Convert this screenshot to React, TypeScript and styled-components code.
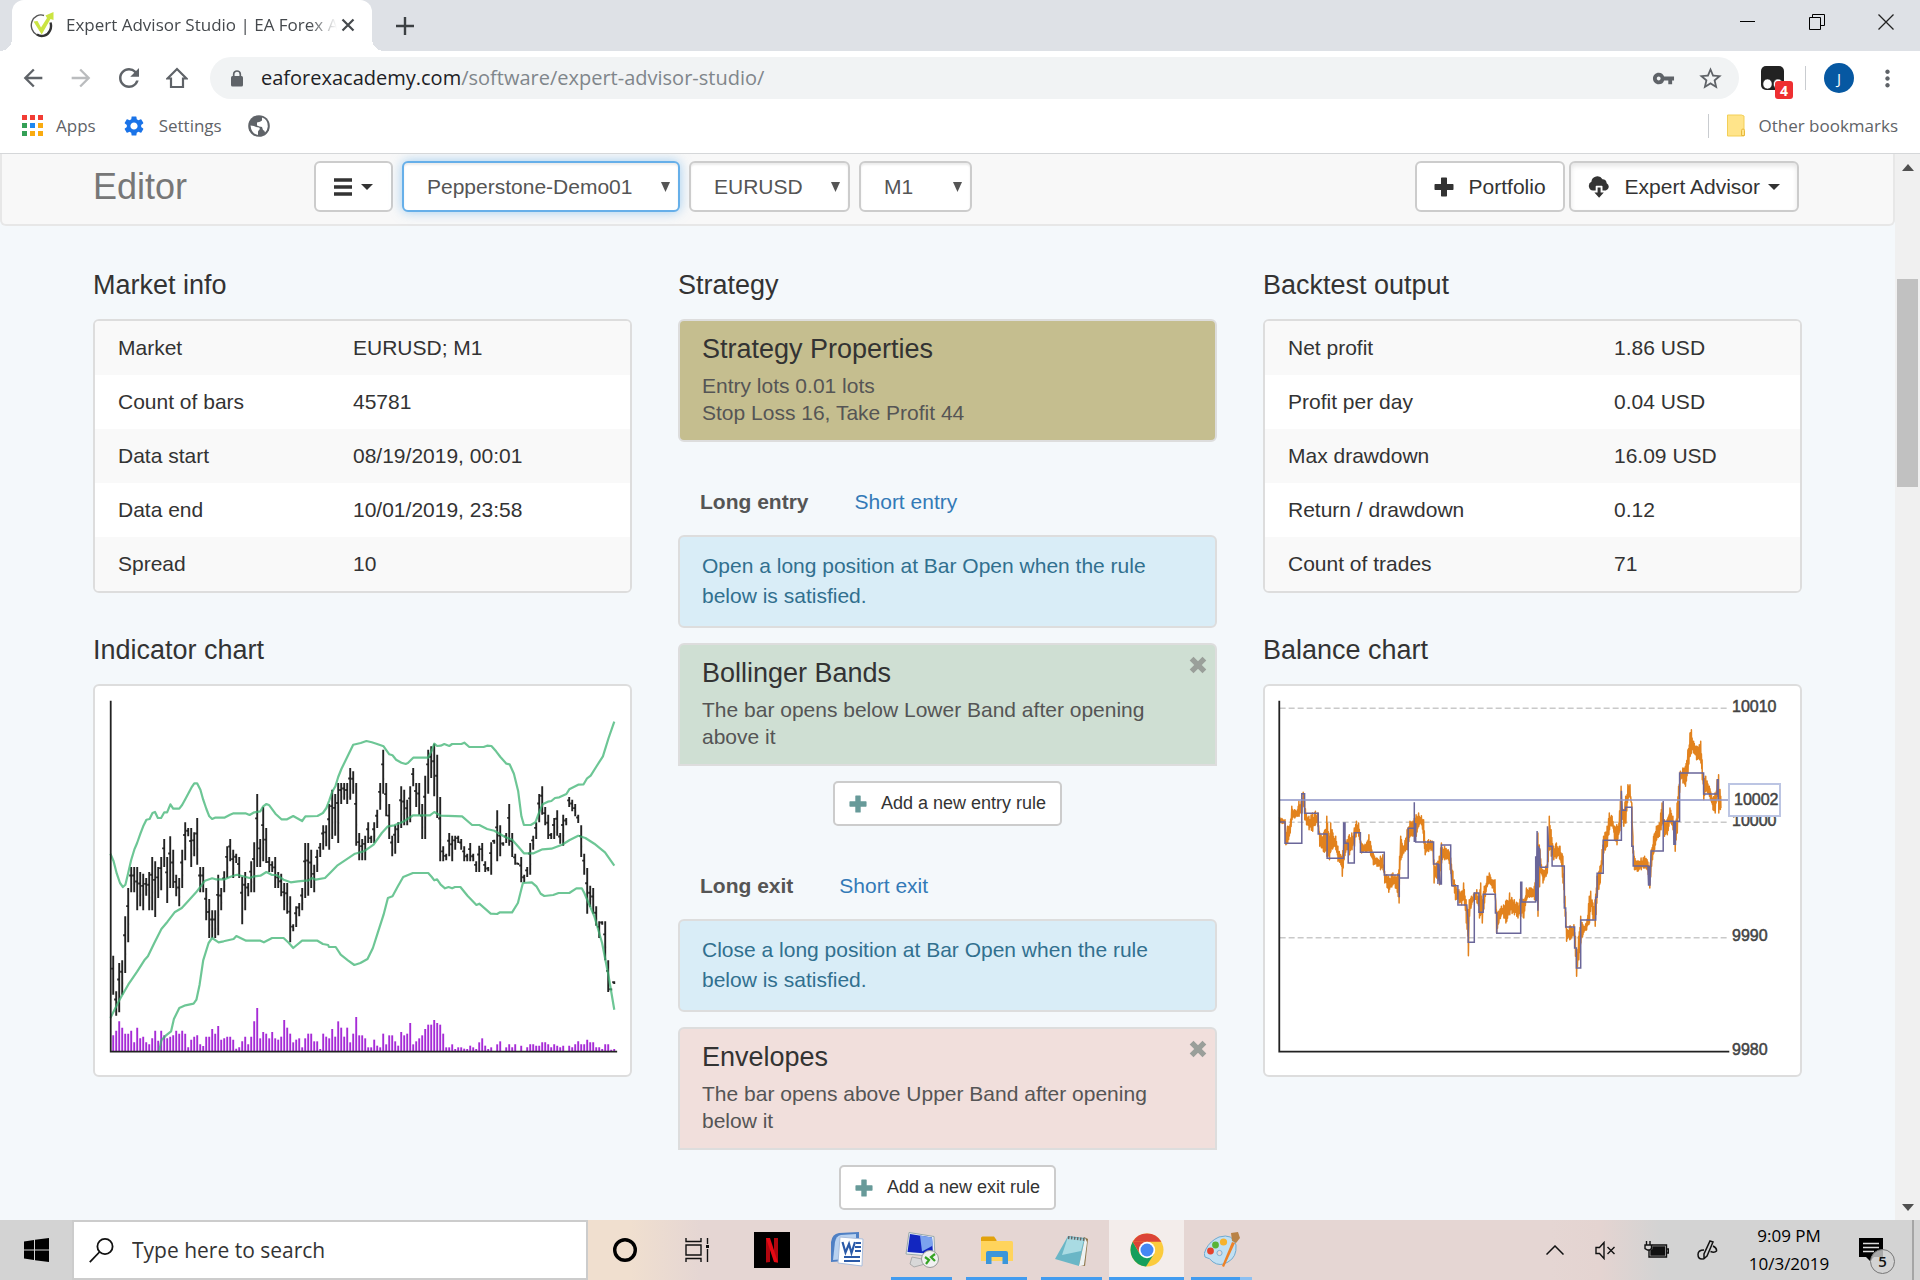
import React from "react";
import styled, { createGlobalStyle, css } from "styled-components";
import {
  MdArrowBack,
  MdArrowForward,
  MdMoreVert,
  MdRefresh,
  MdSettings,
  MdStarBorder,
  MdVpnKey,
} from "react-icons/md";

const uiFont = `"Open Sans", "Noto Sans", sans-serif`;
const pageFont = `"Liberation Sans", Arial, sans-serif`;

const GlobalStyle = createGlobalStyle`
  *, *::before, *::after { box-sizing: border-box; }
  html, body { margin: 0; padding: 0; overflow: hidden; }
  body { font-family: ${pageFont}; color: #333; background: #f4f8fb; }
  button, input, select { font: inherit; color: inherit; margin: 0; }
  h1, h2, h3, p { margin: 0; font-weight: 400; }
  svg { display: block; flex: none; }
`;

/* ---------- window ---------- */

const Desktop = styled.div`
  display: flex;
  flex-direction: column;
  height: 100vh;
  min-height: 600px;
`;

const PlainButton = styled.button`
  display: flex;
  align-items: center;
  justify-content: center;
  padding: 0;
  border: 0;
  background: none;
  cursor: pointer;
`;

const Chrome = styled.header`
  flex: none;
  font-family: ${uiFont};
  background: #fff;
  border-bottom: 1px solid #d5d7d9;
`;

const TabStrip = styled.div`
  display: flex;
  height: 51px;
  padding-left: 12px;
  background: #dee1e6;
`;

const Tab = styled.div`
  position: relative;
  display: flex;
  align-items: center;
  width: 360px;
  padding: 0 17px 2px 18px;
  border-radius: 12px 12px 0 0;
  background: #fff;

  &::before,
  &::after {
    content: "";
    position: absolute;
    bottom: 0;
    width: 12px;
    height: 12px;
  }
  &::before {
    left: -12px;
    background: radial-gradient(circle at 0 0, transparent 12px, #fff 12px);
  }
  &::after {
    right: -12px;
    background: radial-gradient(circle at 100% 0, transparent 12px, #fff 12px);
  }
`;

const TabTitle = styled.span`
  flex: 1;
  min-width: 0;
  margin: 0 4px 0 12px;
  white-space: nowrap;
  font-size: 17px;
  line-height: 24px;
  color: #45494d;
  mask-image: linear-gradient(to right, #000 90%, transparent);
`;

const NewTab = styled(PlainButton)`
  width: 66px;
  color: #3c4043;
`;

const WindowControls = styled.div`
  display: flex;
  height: 43px;
  margin-left: auto;
`;

const WindowControl = styled(PlainButton)`
  width: 69px;
  color: #000;
`;

const Toolbar = styled.div`
  display: flex;
  align-items: center;
  height: 54px;
  padding: 0 19px 0 9px;
  color: #5f6368;
`;

const NavButton = styled(PlainButton)<{ $dim?: boolean }>`
  width: 48px;
  height: 48px;
  color: ${(p) => (p.$dim ? "#babcbe" : "#5f6368")};
`;

const Omnibox = styled.div`
  display: flex;
  flex: 1;
  align-items: center;
  height: 42px;
  margin-left: 9px;
  padding: 0 15px 0 20px;
  border-radius: 21px;
  background: #f1f3f4;
`;

const Url = styled.div`
  flex: 1;
  min-width: 0;
  margin-left: 17px;
  overflow: hidden;
  white-space: nowrap;
  font-size: 20px;
  line-height: 30px;
  color: #80868b;

  b {
    font-weight: 400;
    color: #202124;
  }
`;

const OmniButton = styled(PlainButton)`
  margin-left: 22px;
  color: #5f6368;
`;

const Extension = styled(PlainButton)`
  position: relative;
  width: 32px;
  height: 42px;
  margin-left: 22px;
  justify-content: flex-start;
`;

const ExtensionCount = styled.span`
  position: absolute;
  right: 0;
  bottom: 0;
  width: 18px;
  height: 18px;
  border-radius: 3px;
  background: #ee2f31;
  font-size: 14px;
  font-weight: 700;
  line-height: 19px;
  text-align: center;
  color: #fff;
`;

const Divider = styled.span<{ $gap: number }>`
  width: 1px;
  height: 24px;
  margin: 0 ${(p) => p.$gap}px 0 12px;
  background: #c9ccd0;
`;

const Avatar = styled(PlainButton)`
  width: 30px;
  height: 30px;
  border-radius: 50%;
  background: #0658a2;
  font-size: 15px;
  color: #fff;
`;

const MenuDots = styled(PlainButton)`
  margin-left: 20px;
  color: #5f6368;
`;

const Bookmarks = styled.nav`
  display: flex;
  align-items: center;
  height: 48px;
  padding: 0 22px 7px;
  font-size: 17px;
  line-height: 24px;
  color: #5f6368;
`;

const Bookmark = styled.a<{ $indent?: number }>`
  display: flex;
  align-items: center;
  gap: 13px;
  margin-left: ${(p) => p.$indent ?? 0}px;
  color: #5f6368;
  text-decoration: none;
`;

const Spacer = styled.span`
  flex: 1;
`;

/* ---------- page ---------- */

const Viewport = styled.div`
  display: flex;
  flex: 1;
  min-height: 0;
`;

const Page = styled.main`
  flex: 1;
  min-width: 0;
  overflow: hidden;
  background: #f4f8fb;
`;

const Scrollbar = styled.div`
  display: flex;
  flex: none;
  flex-direction: column;
  align-items: center;
  width: 25px;
  padding: 10px 0 9px;
  background: #f0f0f0;
`;

const ScrollTrack = styled.div`
  flex: 1;
  width: 21px;
  padding-top: 108px;
`;

const ScrollThumb = styled.div`
  height: 22.5%;
  background: #c1c1c1;
`;

const Container = styled.div`
  max-width: 1709px;
  margin: 0 auto;
`;

const EditorBar = styled.section`
  height: 72px;
  padding-top: 7px;
  border: solid #e7e7e7;
  border-width: 0 2px 2px;
  border-radius: 0 0 6px 6px;
  background: #f8f8f8;
`;

const EditorRow = styled(Container)`
  display: flex;
  align-items: center;
`;

const Brand = styled.h1`
  width: 221px;
  font-size: 36px;
  line-height: 51px;
  color: #777;
`;

const control = css`
  height: 51px;
  border: 2px solid #ccc;
  border-radius: 6px;
  background: #fff;
  font-size: 21px;
  line-height: 30px;
`;

const BarButton = styled.button<{ $pressed?: boolean }>`
  ${control}
  display: flex;
  align-items: center;
  padding: 0 17px;
  color: #333;
  white-space: nowrap;
  cursor: pointer;
  box-shadow: ${(p) => (p.$pressed ? "inset 0 3px 5px rgba(0, 0, 0, 0.1)" : "none")};
`;

const MenuButton = styled(BarButton)`
  justify-content: center;
  gap: 9px;
  width: 79px;
`;

const SelectWrap = styled.label<{ $width: number }>`
  position: relative;
  width: ${(p) => p.$width}px;
  margin-left: 9px;

  svg {
    position: absolute;
    top: 21px;
    right: 10px;
    pointer-events: none;
  }
`;

const Select = styled.select<{ $active?: boolean }>`
  ${control}
  width: 100%;
  padding: 0 23px;
  appearance: none;
  outline: none;
  color: #555;
  border-color: ${(p) => (p.$active ? "#66afe9" : "#ccc")};
  box-shadow: ${(p) =>
    p.$active
      ? "inset 0 2px 2px rgba(0, 0, 0, 0.08), 0 0 12px rgba(102, 175, 233, 0.6)"
      : "inset 0 2px 2px rgba(0, 0, 0, 0.08)"};
`;

const BarActions = styled.div`
  display: flex;
  gap: 4px;
  margin-left: auto;
  padding-right: 3px;
`;

const ButtonLabel = styled.span`
  margin: 0 8px 0 15px;
  &:last-child {
    margin-right: 0;
  }
`;

const Columns = styled(Container)`
  display: grid;
  grid-template-columns: repeat(3, minmax(0, 1fr));
  gap: 46px;
  padding-top: 44px;
`;

const Heading = styled.h2`
  margin-bottom: 19px;
  font-size: 27px;
  line-height: 30px;
`;

const box = css`
  border: 2px solid #ddd;
  border-radius: 6px;
`;

const TablePanel = styled.div`
  ${box}
  margin-bottom: 42px;
  overflow: hidden;
  background: #fff;
`;

const DataTable = styled.table<{ $label: number }>`
  width: 100%;
  border-collapse: collapse;
  font-size: 21px;
  line-height: 30px;

  th,
  td {
    height: 54px;
    padding: 0;
    font-weight: 400;
    text-align: left;
  }
  th {
    width: ${(p) => p.$label}px;
    padding-left: 23px;
  }
  tr:nth-child(odd) {
    background: #f9f9f9;
  }
`;

const ChartPanel = styled.div`
  ${box}
  height: 393px;
  overflow: hidden;
  background: #fff;
`;

const Card = styled.article<{ $color: string; $joined?: boolean }>`
  ${box}
  position: relative;
  padding: 13px 22px 14px;
  background: ${(p) => p.$color};
  ${(p) =>
    p.$joined &&
    css`
      border-bottom-right-radius: 0;
      border-bottom-left-radius: 0;
    `}
`;

const CardTitle = styled.h3`
  margin-bottom: 8px;
  font-size: 27px;
  line-height: 30px;
`;

const CardText = styled.p`
  max-width: 460px;
  font-size: 21px;
  line-height: 27px;
  color: #555;
`;

const RemoveRule = styled(PlainButton)`
  position: absolute;
  top: 10px;
  right: 7px;
  width: 20px;
  height: 20px;
`;

const RuleTabs = styled.nav`
  display: flex;
  margin: 30px 0 3px;
`;

const RuleTab = styled.a<{ $current?: boolean }>`
  padding: 15px 24px 15px 22px;
  font-size: 21px;
  line-height: 30px;
  text-decoration: none;
  font-weight: ${(p) => (p.$current ? 700 : 400)};
  color: ${(p) => (p.$current ? "#555" : "#337ab7")};
`;

const Hint = styled.p`
  ${box}
  margin-bottom: 15px;
  padding: 14px 22px 15px;
  background: #d9edf7;
  font-size: 21px;
  line-height: 30px;
  color: #31708f;

  span {
    display: block;
    max-width: 460px;
  }
`;

const AddRule = styled.button`
  display: flex;
  align-items: center;
  gap: 14px;
  height: 45px;
  margin: 15px auto 0;
  padding: 0 14px;
  border: 2px solid #ccc;
  border-radius: 5px;
  background: #fff;
  font-size: 18px;
  line-height: 27px;
  color: #333;
  cursor: pointer;
`;

/* ---------- taskbar ---------- */

const Taskbar = styled.footer`
  display: flex;
  flex: none;
  height: 60px;
  font-family: ${uiFont};
  background: linear-gradient(
    to right,
    #d3d3d3 0,
    #d3d3d3 73px,
    #f0dfcf 560px,
    #f0dfcf 630px,
    #e5d6d3 700px,
    #e5d6d3 1550px,
    #e4d4d1 1600px,
    #d3d3d3 1660px
  );
`;

const StartButton = styled(PlainButton)`
  width: 72px;
`;

const SearchBox = styled.label`
  display: flex;
  align-items: center;
  width: 516px;
  padding-left: 15px;
  border: 2px solid #ccc;
  background: #fff;
`;

const SearchInput = styled.input`
  flex: 1;
  min-width: 0;
  margin-left: 18px;
  padding: 0;
  border: 0;
  outline: 0;
  background: none;
  font-size: 21px;
  line-height: 30px;
  color: #333;

  &::placeholder {
    color: #333;
    opacity: 1;
  }
`;

const TaskItem = styled(PlainButton)<{
  $open?: boolean;
  $focused?: boolean;
  $stacked?: boolean;
  $system?: boolean;
}>`
  position: relative;
  width: ${(p) => (p.$system ? 73 : 75)}px;
  background: ${(p) => (p.$focused ? "#f3edeb" : "none")};

  &::after {
    content: "";
    position: absolute;
    bottom: 0;
    left: ${(p) => (p.$focused ? 0 : 7)}px;
    right: ${(p) => (p.$focused ? 0 : 7)}px;
    height: 3px;
    display: ${(p) => (p.$open || p.$focused ? "block" : "none")};
    background: ${(p) =>
      p.$stacked ? "linear-gradient(to right, #429cf0 80%, #8cc0f2 80%)" : "#429cf0"};
  }
`;

const Tray = styled.div`
  display: flex;
  margin-left: auto;
  padding-right: 6px;
`;

const TrayButton = styled(PlainButton)`
  width: 51px;
`;

const Clock = styled.time`
  width: 112px;
  padding-top: 2px;
  font-size: 17px;
  line-height: 28px;
  text-align: center;
  color: #000;
`;

const Notifications = styled(PlainButton)`
  position: relative;
  width: 51px;
  margin-right: 16px;
`;

const NoticeCount = styled.span`
  position: absolute;
  right: 1px;
  bottom: 6px;
  width: 25px;
  height: 25px;
  border: 1px solid #777;
  border-radius: 50%;
  background: rgba(211, 211, 211, 0.8);
  font-size: 15px;
  font-weight: 600;
  line-height: 23px;
  color: #111;
`;

const ShowDesktop = styled.span`
  width: 2px;
  background: #a5a5a5;
`;

/* ---------- glyphs ---------- */

const PlusGlyph = ({ size, color }: { size: number; color: string }) => (
  <svg width={size} height={size} viewBox="0 0 20 20" fill={color}>
    <path d="M7 1.2Q7 .5 7.7.5h4.6q.7 0 .7.700V7h5.800q.7 0 .7.700v4.600q0 .7-.7.700H13v5.800q0 .7-.7.700H7.700q-.7 0-.7-.7V13H1.200q-.7 0-.7-.7V7.700q0-.7.7-.7H7z" />
  </svg>
);

const CrossGlyph = () => (
  <svg width="20" height="20" viewBox="0 0 20 20">
    <path d="M3.600 3.600l12.800 12.800M16.400 3.600L3.600 16.400" stroke="#9a9f9a" strokeWidth="5.400" />
  </svg>
);

const Caret = () => (
  <svg width="12" height="6" viewBox="0 0 12 6">
    <path d="M0 0h12L6 6z" fill="#333" />
  </svg>
);

const SelectArrow = () => (
  <svg width="9" height="10" viewBox="0 0 9 10">
    <path d="M0 0h9L4.500 10z" fill="#555" />
  </svg>
);

const CloudDownload = () => (
  <svg width="22" height="22" viewBox="0 0 22 22" fill="#333">
    <path d="M5 14.500a4.600 4.600 0 0 1-1.600-8.700A6 6 0 0 1 14.500 3.300a4.500 4.500 0 0 1 4.200 4 3.900 3.900 0 0 1-.9 7.200h-3.300v-4q0-.7-.7-.7H8.400q-.7 0-.7.700v4z" />
    <path d="M9.600 11.500h3v5h3.200L11.100 21.700 6.400 16.500h3.200z" />
  </svg>
);

const LockGlyph = () => (
  <svg width="14" height="17" viewBox="0 0 14 17">
    <rect x="1" y="6" width="12" height="10.500" rx="1.500" fill="#5f6368" />
    <path d="M3.700 7V4.300a3.300 3.300 0 0 1 6.600 0V7" fill="none" stroke="#5f6368" strokeWidth="1.700" />
  </svg>
);

const GlobeGlyph = () => (
  <svg width="22" height="22" viewBox="0 0 22 22">
    <circle cx="11" cy="11" r="10.800" fill="#5f6368" />
    <path
      d="M2.500 10.500q4 .2 5.500 1.500l3 .5q1.500 1 0 2.500l-1 1.500v3.500q-6.500-.8-7.500-9.500z"
      fill="#fff"
    />
    <path d="M14 2.500q6 2 5.800 9-.3 4-2.800 6-.3-2.500-2-2.500l-1-3-2.500-.5-2.500-1v-3l3-.8 2-1.200z" fill="#fff" />
  </svg>
);

/* ---------- charts ---------- */

type Pair = [number, number];

// Chart data is kept on a 1568 x 1260 plotting grid and projected onto the panel.
const px = (x: number) => (x - 42) / 2.8;
const py = (y: number) => (y - 49) / 3;
const parse = (s: string): Pair[] =>
  s
    .trim()
    .split(/\s+/)
    .map((p) => p.split(",").map(Number) as Pair);
const line = (pts: Pair[]) =>
  pts.map(([x, y], i) => `${i ? "L" : "M"}${px(x).toFixed(1)} ${py(y).toFixed(1)}`).join("");

const BARS = parse(`858,975 965,1038 880,1028 872,975 740,910 655,818 592,668 592,668 592,722 607,710 612,722 625,678
607,722 562,722 575,742 592,685 562,662 508,592 562,700 500,655 540,655 615,680 625,710 540,655 458,572 475,500 475,592
488,560 445,585 592,668 592,668 655,752 688,805 722,805 722,805 615,797 655,722 605,668 530,625 508,575 540,625 552,580
562,625 622,764 607,722 640,680 575,668 518,668 373,592 508,592 412,575 475,580 562,607 575,607 562,655 607,655 612,680
640,722 640,732 680,818 764,785 710,772 700,740 655,722 520,685 520,678 540,655 585,668 540,607 520,562 467,540 467,530
403,540 360,508 373,498 340,520 340,403 340,390 340,403 295,390 305,372 340,528 490,572 508,572 498,572 458,520 498,520
458,520 420,475 340,420 240,372 340,440 403,508 498,560 467,552 458,520 350,475 360,467 390,467 350,458 295,350 340,412
340,435 403,508 318,508 240,372 230,325 222,380 255,445 382,575 530,575 552,572 490,560 498,575 498,540 498,520 508,540
530,575 552,575 520,575 552,575 575,607 528,607 520,575 575,607 592,605 518,615 510,522 422,575 467,560 518,528 490,520
403,528 490,562 552,585 580,585 562,638 615,638 592,622 520,615 498,540 458,508 373,458 350,435 412,467 435,508 490,508
445,508 422,498 490,522 435,528 445,467 382,412 390,425 403,440 435,460 467,562 552,615 595,732 648,712 655,732 710,768
755,805 755,765 755,872 872,967 958,960 935,943`);

const VOLUMES =
  `1097 1083 1055 1074 1092 1092 1083 1118 1074 1106 1101 1118 1124 1106 1083 1113 1083 1097 1106 1101 1097 1083 1092 1083
1092 1133 1110 1101 1097 1124 1129 1101 1101 1078 1092 1069 1110 1106 1101 1101 1110 1137 1133 1115 1101 1124 1101 1055 1015
1106 1087 1092 1106 1087 1106 1110 1101 1051 1074 1092 1118 1110 1106 1133 1106 1092 1092 1115 1115 1138 1092 1101 1106 1078
1101 1055 1074 1101 1074 1118 1092 1042 1097 1097 1106 1133 1133 1110 1128 1133 1092 1124 1097 1097 1115 1128 1087 1097 1092
1060 1124 1115 1106 1097 1078 1065 1065 1051 1060 1065 1092 1133 1133 1124 1138 1133 1133 1137 1138 1128 1133 1138 1118 1106
1128 1138 1133 1145 1124 1115 1145 1133 1124 1133 1124 1145 1128 1145 1133 1124 1124 1128 1128 1118 1118 1124 1133 1124 1128
1133 1128 1145 1128 1133 1124 1115 1124 1124 1110 1118 1118 1133 1133 1138 1124 1124 1140 1138`
    .split(/\s+/)
    .map(Number);

const BANDS = [
  `85,552 94,575 103,612 112,640 120,652 127,645 135,610 143,572 152,540 160,520 169,492 177,470 186,450 195,448 203,430
210,427 218,445 227,445 236,428 244,428 253,404 261,417 278,417 286,406 295,388 304,370 312,354 320,341 328,341 337,360
345,390 354,418 362,440 370,448 378,444 404,444 420,435 430,431 463,431 475,436 488,428 505,425 513,410 522,403 530,407
547,432 564,449 580,449 597,439 622,454 631,440 665,439 680,430 690,415 698,392 706,367 715,350 723,322 732,298 765,225
774,223 786,220 802,214 817,218 830,222 850,230 866,254 875,257 885,270 900,279 912,283 918,280 933,264 975,264 984,245
992,222 1000,229 1010,228 1020,223 1034,229 1042,223 1068,223 1076,219 1090,232 1130,232 1140,228 1152,229 1165,245
1177,262 1194,282 1203,284 1215,312 1227,365 1236,440 1243,466 1262,466 1275,458 1285,430 1295,404 1310,396 1320,394
1330,385 1342,383 1362,373 1370,359 1395,345 1410,344 1420,326 1430,318 1445,292 1464,260 1480,205 1496,156`,
  `85,1045 110,992 135,945 160,906 180,872 190,860 208,820 228,778 245,756 265,728 285,715 300,698 325,668 350,633 370,626
380,629 405,629 425,620 440,615 475,625 488,620 505,618 522,607 538,616 550,616 570,630 590,638 610,635 640,632 650,625
660,630 686,625 700,610 720,588 745,570 770,552 795,545 822,525 845,490 862,470 880,467 905,456 933,437 980,437 992,427
1010,438 1070,440 1098,466 1118,466 1140,478 1160,483 1190,502 1210,510 1228,532 1243,551 1270,551 1295,539 1320,537
1350,525 1370,512 1395,498 1415,505 1440,522 1470,548 1496,588`,
  `222,1143 228,1112 240,1098 255,1085 263,1048 278,1015 295,1007 318,1002 326,990 335,945 345,872 360,820 370,805 388,818
402,815 430,808 438,799 465,813 505,813 515,818 538,805 570,805 585,820 597,835 622,813 665,813 680,823 695,826 697,832
716,832 730,855 750,872 768,886 785,880 805,868 820,835 835,785 850,735 862,685 875,680 890,650 905,622 932,610 975,610
985,622 992,632 1000,629 1010,645 1022,656 1032,652 1042,656 1050,652 1065,652 1085,678 1110,706 1118,702 1150,732
1168,733 1176,728 1210,728 1226,700 1240,640 1265,638 1278,650 1290,672 1300,679 1325,676 1340,670 1370,670 1390,656
1405,656 1412,670 1440,740 1462,820 1480,920 1496,1020`,
].map(parse);

const LadderBars = () => (
  <g stroke="#222" strokeWidth="1.900">
    {BARS.map(([hi, lo], i) => {
      const x = px(93 + i * 8.4);
      const top = py(hi);
      const bottom = py(lo);
      return (
        <path
          key={i}
          fill="none"
          d={`M${x} ${top}V${bottom}M${x - 2} ${(top * 2 + bottom) / 3}H${x}M${x} ${(top + bottom * 2) / 3}H${x + 1}`}
        />
      );
    })}
  </g>
);

const IndicatorChart = () => (
  <svg width="535" height="389" viewBox="0 0 535 389" role="img" aria-label="Indicator chart">
    <g stroke="#a62bd6" strokeWidth="1.900">
      {VOLUMES.map((v, i) => {
        const x = px(93 + i * 8.4);
        return <path key={i} d={`M${x} ${py(v)}V${py(1145)}`} />;
      })}
    </g>
    <LadderBars />
    <g fill="none" stroke="#3cb371" strokeOpacity="0.75" strokeWidth="2.200" strokeLinejoin="round">
      {BANDS.map((b, i) => (
        <path key={i} d={line(b)} />
      ))}
    </g>
    <path d={`M${px(86)} ${py(93)}V${py(1146)}H${px(1504)}`} fill="none" stroke="#222" strokeWidth="1.800" />
  </svg>
);

const EQUITY = `83,442,460 98,450,465 100,500,525 105,470,520 112,465,490 117,410,450 125,420,445 133,420,440 137,395,440
145,395,430 149,368,400 153,395,450 158,435,465 165,440,480 175,430,485 183,425,465 190,430,470 195,490,530 205,500,545
215,440,560 222,500,570 226,460,545 232,490,535 240,500,540 246,530,575 254,555,585 258,560,620 263,500,570 272,510,540
278,495,555 285,490,540 292,475,530 298,455,490 304,460,500 312,520,550 325,525,545 333,495,545 345,550,585 355,565,590
365,560,600 372,555,600 377,605,640 388,620,668 400,610,645 412,620,668 417,600,700 419,560,600 422,500,570 430,530,550
440,480,540 448,455,500 456,455,500 465,435,500 472,430,470 480,438,465 486,450,520 490,515,555 500,510,545 511,515,540
515,570,640 522,580,625 530,560,645 536,520,580 545,530,570 555,540,570 560,550,600 568,605,650 575,645,690 585,660,700
592,665,705 598,640,690 605,690,760 611,720,858 614,690,740 620,680,705 628,670,690 635,660,700 642,680,745 646,640,730
650,690,760 656,650,700 664,620,650 670,610,640 678,630,655 686,630,680 690,720,790 696,725,760 704,710,735 716,695,760
727,670,735 740,690,735 750,700,745 758,680,740 766,690,745 774,655,690 785,655,680 796,650,690 801,570,690 806,490,740
812,540,610 820,600,640 832,585,610 838,440,540 843,480,560 850,530,570 858,520,565 868,530,570 876,560,640 880,640,700
882,680,740 886,770,815 895,770,810 907,765,800 911,800,860 914,850,920 920,800,870 926,740,820 932,765,795 942,760,780
950,680,760 954,665,710 960,700,750 966,690,770 972,620,680 980,590,640 990,500,550 1000,470,530 1006,430,480 1014,440,465
1020,470,510 1027,465,525 1033,460,490 1039,350,470 1046,420,470 1052,380,460 1058,345,390 1064,345,380 1069,400,450
1072,500,550 1076,560,600 1084,575,605 1095,565,600 1105,560,595 1112,570,600 1119,590,655 1124,540,590 1130,500,550
1138,470,510 1146,460,500 1154,400,460 1160,450,500 1168,450,495 1176,415,455 1184,440,480 1190,460,545 1196,400,490
1200,350,410 1205,305,330 1212,295,340 1219,290,350 1226,240,310 1232,190,260 1236,180,250 1242,215,250 1250,230,270
1258,225,270 1262,215,280 1266,270,330 1270,320,390 1276,320,365 1286,350,380 1296,385,420 1302,370,430 1308,330,380
1312,315,430 1318,380,415 1321,390,420`
  .split(/\s+/)
  .map((p) => p.split(",").map(Number));

// Swings between the low and high of every interval, varying the reach a little at each step.
const equityLine = (): Pair[] => {
  const out: Pair[] = [];
  for (let i = 0; i < EQUITY.length - 1; i++) {
    const [x0, t0, b0] = EQUITY[i];
    const [x1, t1, b1] = EQUITY[i + 1];
    out.push([x0, t0], [x0 + 0.5, b0]);
    for (let x = x0 + 2; x < x1 - 1; x += 2) {
      const k = (x - x0) / (x1 - x0);
      const top = t0 + (t1 - t0) * k;
      const bottom = b0 + (b1 - b0) * k;
      const reach = ((x * 37) % 23) / 23;
      const slack = (bottom - top) * 0.4 * reach;
      out.push([x, top + slack], [x + 1, bottom - slack * 0.8]);
    }
  }
  return out;
};

const BALANCE = parse(`83,457 98,457 98,521 145,521 145,372 153,372 153,431 191,431 191,493 216,493 216,566 262,566 262,460
266,460 266,521 275,521 275,580 292,580 292,489 309,489 309,548 376,548 376,616 418,616 418,683 418,625 443,625 443,476
460,476 460,398 460,517 464,460 464,517 514,517 514,583 526,583 526,643 529,583 532,643 536,643 536,526 562,526 562,583
565,648 582,648 582,706 607,706 611,760 611,818 628,818 628,670 641,670 641,728 653,728 653,674 687,674 687,730 691,730
691,791 758,791 758,638 761,638 761,697 800,697 800,560 802,695 804,484 806,723 808,530 811,590 811,535 813,593 833,593
833,470 836,530 846,530 846,589 880,589 880,715 884,715 884,772 909,772 909,835 914,835 914,895 926,895 926,751 968,751
968,683 972,683 972,611 989,611 989,512 1040,512 1040,363 1042,422 1052,422 1052,413 1069,413 1069,530 1073,530 1073,589
1114,589 1116,648 1118,589 1120,648 1123,544 1157,544 1157,394 1157,455 1186,455 1187,526 1189,455 1191,526 1191,455
1203,455 1203,310 1270,310 1270,373 1308,373 1309,328 1310,373 1311,328 1311,390`);

const BalanceChart = () => (
  <svg width="535" height="389" viewBox="0 0 535 389" role="img" aria-label="Balance chart">
    <g stroke="#c9c9c9" strokeWidth="1.500" strokeDasharray="6 3">
      {[116, 458, 804].map((y) => (
        <path key={y} d={`M${px(83)} ${py(y)}H${px(1336)}`} />
      ))}
    </g>
    <path d={line(equityLine())} fill="none" stroke="#e2821d" strokeWidth="1.500" strokeLinejoin="round" />
    <path d={line(BALANCE)} fill="none" stroke="#6a6699" strokeWidth="1.500" />
    <path d={`M${px(82)} ${py(391)}H${px(1340)}`} stroke="#8c93c6" strokeWidth="1.500" />
    <path d={`M${px(82)} ${py(93)}V${py(1146)}H${px(1342)}`} fill="none" stroke="#222" strokeWidth="1.800" />
    <g fontFamily="Liberation Sans, Arial, sans-serif" fontSize="16" fill="#444" stroke="#444" strokeWidth="0.500">
      <text x="467" y="26">10010</text>
      <text x="467" y="140">10000</text>
      <text x="467" y="255">9990</text>
      <text x="467" y="369">9980</text>
      <rect x="464" y="98" width="51" height="32" fill="#fff" stroke="#bcc5e3" strokeWidth="2" />
      <text x="469" y="119">10002</text>
    </g>
  </svg>
);

/* ---------- content ---------- */

const marketInfo = [
  ["Market", "EURUSD; M1"],
  ["Count of bars", "45781"],
  ["Data start", "08/19/2019, 00:01"],
  ["Data end", "10/01/2019, 23:58"],
  ["Spread", "10"],
];

const backtest = [
  ["Net profit", "1.86 USD"],
  ["Profit per day", "0.04 USD"],
  ["Max drawdown", "16.09 USD"],
  ["Return / drawdown", "0.12"],
  ["Count of trades", "71"],
];

const InfoTable = ({ rows, label }: { rows: string[][]; label: number }) => (
  <TablePanel>
    <DataTable $label={label}>
      <tbody>
        {rows.map(([name, value]) => (
          <tr key={name}>
            <th scope="row">{name}</th>
            <td>{value}</td>
          </tr>
        ))}
      </tbody>
    </DataTable>
  </TablePanel>
);

const BarSelect = (props: { label: string; value: string; width: number; active?: boolean }) => (
  <SelectWrap $width={props.width}>
    <Select $active={props.active} aria-label={props.label} defaultValue={props.value}>
      <option>{props.value}</option>
    </Select>
    <SelectArrow />
  </SelectWrap>
);

const RuleGroup = (props: {
  kind: string;
  hint: string;
  title: string;
  text: string;
  color: string;
}) => (
  <section>
    <RuleTabs>
      <RuleTab href="#long" $current>
        Long {props.kind}
      </RuleTab>
      <RuleTab href="#short">Short {props.kind}</RuleTab>
    </RuleTabs>
    <Hint>
      <span>{props.hint}</span>
    </Hint>
    <Card $color={props.color} $joined>
      <CardTitle>{props.title}</CardTitle>
      <CardText>{props.text}</CardText>
      <RemoveRule aria-label={`Remove ${props.title}`}>
        <CrossGlyph />
      </RemoveRule>
    </Card>
    <AddRule>
      <PlusGlyph size={18} color="#679a99" />
      Add a new {props.kind} rule
    </AddRule>
  </section>
);

const BrowserChrome = () => (
  <Chrome>
    <TabStrip>
      <Tab>
        <svg width="24" height="26" viewBox="0 0 24 26">
          <path d="M14 3.500A9.600 10.500 0 0 0 2 9.500a11 11 0 0 0 5 13.500" fill="none" stroke="#555" strokeWidth="1.400" />
          <path d="M7 22.500a9 9.500 0 0 0 13-4 11 11 0 0 0 .5-8" fill="none" stroke="#333" strokeWidth="2.400" />
          <path d="M3.500 9.500l4-.5 3.500 6.500 6-9.500-1.500-2.500L23.500 0v8l-3-1-8.800 15.500z" fill="#cbe442" />
        </svg>
        <TabTitle>Expert Advisor Studio | EA Forex A</TabTitle>
        <PlainButton aria-label="Close tab">
          <svg width="14" height="14" viewBox="0 0 14 14" stroke="#45494d" strokeWidth="2.200">
            <path d="M1.500 1.500l11 11M12.500 1.500l-11 11" />
          </svg>
        </PlainButton>
      </Tab>
      <NewTab aria-label="New tab">
        <svg width="18" height="18" viewBox="0 0 18 18" stroke="#3c4043" strokeWidth="2.400">
          <path d="M9 0v18M0 9h18" />
        </svg>
      </NewTab>
      <WindowControls>
        <WindowControl aria-label="Minimize">
          <svg width="15" height="15" viewBox="0 0 15 15" stroke="#000">
            <path d="M0 7.500h15" />
          </svg>
        </WindowControl>
        <WindowControl aria-label="Restore">
          <svg width="16" height="16" viewBox="0 0 16 16" stroke="#000" fill="none">
            <path d="M.5 3.500h11v12H.5zM3.500 3.500v-3h12v11h-4" />
          </svg>
        </WindowControl>
        <WindowControl aria-label="Close">
          <svg width="16" height="16" viewBox="0 0 16 16" stroke="#222" strokeWidth="1.300">
            <path d="M.5.500l15 15M15.500.500l-15 15" />
          </svg>
        </WindowControl>
      </WindowControls>
    </TabStrip>
    <Toolbar>
      <NavButton aria-label="Back">
        <MdArrowBack size={28} />
      </NavButton>
      <NavButton $dim aria-label="Forward">
        <MdArrowForward size={28} />
      </NavButton>
      <NavButton aria-label="Reload">
        <MdRefresh size={30} />
      </NavButton>
      <NavButton aria-label="Home">
        <svg width="22" height="22" viewBox="0 0 22 22" fill="none" stroke="#5f6368" strokeWidth="2.200">
          <path d="M1.500 11.500L11 2l9.500 9.500H17V20H5v-8.500z" />
        </svg>
      </NavButton>
      <Omnibox>
        <LockGlyph />
        <Url>
          <b>eaforexacademy.com</b>/software/expert-advisor-studio/
        </Url>
        <OmniButton aria-label="Saved passwords">
          <MdVpnKey size={23} />
        </OmniButton>
        <OmniButton aria-label="Bookmark this page">
          <MdStarBorder size={27} />
        </OmniButton>
      </Omnibox>
      <Extension aria-label="Extension">
        <svg width="23" height="24" viewBox="0 0 23 24">
          <rect width="23" height="24" rx="5" fill="#222" />
          <ellipse cx="6.500" cy="18" rx="4.600" ry="5" fill="#fff" stroke="#222" strokeWidth=".6" />
          <ellipse cx="17" cy="18" rx="4.600" ry="5" fill="#fff" stroke="#222" strokeWidth=".6" />
        </svg>
        <ExtensionCount>4</ExtensionCount>
      </Extension>
      <Divider $gap={18} />
      <Avatar aria-label="Profile">J</Avatar>
      <MenuDots aria-label="Menu">
        <MdMoreVert size={27} />
      </MenuDots>
    </Toolbar>
    <Bookmarks>
      <Bookmark href="#apps">
        <svg width="21" height="21" viewBox="0 0 21 21">
          {["#f23c34", "#f23c34", "#f23c34", "#34a056", "#1e88f2", "#f9ab11", "#34a056", "#f9ab11", "#f9ab11"].map(
            (c, i) => (
              <rect key={i} x={(i % 3) * 8} y={Math.floor(i / 3) * 8} width="5" height="5" fill={c} />
            )
          )}
        </svg>
        Apps
      </Bookmark>
      <Bookmark href="#settings" $indent={26}>
        <MdSettings size={24} color="#1a73e8" />
        Settings
      </Bookmark>
      <Bookmark href="#site" $indent={26} aria-label="Site">
        <GlobeGlyph />
      </Bookmark>
      <Spacer />
      <Divider $gap={18} />
      <Bookmark href="#other">
        <svg width="18" height="23" viewBox="0 0 18 23">
          <path d="M.5 1h14l2.500 1v20H.5z" fill="#ffe48a" stroke="#f3cf57" />
          <path d="M14.500 21.500v-5a1.500 1.500 0 0 1 3 0v5z" fill="#ffe48a" stroke="#e9b93c" />
        </svg>
        Other bookmarks
      </Bookmark>
    </Bookmarks>
  </Chrome>
);

const WindowsTaskbar = () => (
  <Taskbar>
    <StartButton aria-label="Start">
      <svg width="25" height="24" viewBox="0 0 25 24">
        <path d="M0 3.500l10-1.500v9.500H0zM11 1.800L25 0v11.500H11zM0 12.500h10V22L0 20.500zM11 12.500h14V24l-14-1.800z" />
      </svg>
    </StartButton>
    <SearchBox>
      <svg width="25" height="25" viewBox="0 0 25 25" fill="none" stroke="#111" strokeWidth="1.800">
        <circle cx="16" cy="8.500" r="7.600" />
        <path d="M10.500 14L.8 24.200" />
      </svg>
      <SearchInput placeholder="Type here to search" aria-label="Type here to search" />
    </SearchBox>
    <TaskItem $system aria-label="Cortana">
      <svg width="26" height="26" viewBox="0 0 26 26">
        <circle cx="13" cy="13" r="10.300" fill="none" stroke="#000" strokeWidth="3.400" />
      </svg>
    </TaskItem>
    <TaskItem $system aria-label="Task view">
      <svg width="25" height="24" viewBox="0 0 25 24" fill="none" stroke="#111" strokeWidth="1.400">
        <path d="M1 0v3.500h15V0M1 7h15v10H1zM1 24v-3.500h15V24M22.500 0v6M22.500 11v13" />
        <path d="M21 7h3v3h-3z" fill="#111" stroke="none" />
      </svg>
    </TaskItem>
    <TaskItem aria-label="Netflix">
      <svg width="36" height="36" viewBox="0 0 36 36">
        <path d="M0 0h36v36H0z" />
        <path d="M12 6h4v24l-4 .6zM20 6h4v24.600l-4-.6z" fill="#b1060f" />
        <path d="M12 6h4l8 24.600-4-.6z" fill="#e50914" />
      </svg>
    </TaskItem>
    <TaskItem aria-label="Word">
      <svg width="34" height="36" viewBox="0 0 34 36">
        <path d="M1 10Q2 2 9 1l20-1v28L1 30z" fill="#4f80c4" />
        <path d="M5 10Q6 4 11 3l15-1v24L3 28z" fill="#b9d2f0" />
        <path d="M10 5l23 2-1 27-24-3z" fill="#fff" stroke="#a9bedd" />
        <path d="M12.500 10l3 10.500L19 12l2.500 9L25 10" fill="none" stroke="#2a5aa8" strokeWidth="2.200" />
        <path d="M26 11h5M25 15h6M25 19h6M14 25h16M14 29h16" stroke="#2a5aa8" strokeWidth="2" />
      </svg>
    </TaskItem>
    <TaskItem $open aria-label="Remote Desktop">
      <svg width="36" height="36" viewBox="0 0 36 36">
        <path d="M8 25l10 2 3 5-11 3-4-3z" fill="#d8d8d8" stroke="#aaa" />
        <path d="M5 .500l25 4 1 20L2 22z" fill="#e8edf5" stroke="#9aa" />
        <path d="M6 2l22 3.500 1 16.500L3.500 20z" fill="#1226c0" />
        <path d="M16 3.500l12 2 1 8-11 6z" fill="#7ba2ee" />
        <circle cx="26" cy="27" r="8.500" fill="#f1f1f1" stroke="#999" />
        <path d="M21 25l4 3-3 4M31 22l-4 3 4 4" fill="none" stroke="#36a323" strokeWidth="2.200" />
      </svg>
    </TaskItem>
    <TaskItem $open aria-label="File Explorer">
      <svg width="34" height="28" viewBox="0 0 34 28">
        <path d="M1 2q0-1.500 1.500-1.500H14L16.500 4V9H1z" fill="#e2a20c" />
        <path d="M1 5h30.500q1.500 0 1.500 1.500V25H1z" fill="#ffd45c" />
        <path d="M6 28V17q0-2 2-2h18q2 0 2 2v11h-5.500v-7h-11v7z" fill="#3b96da" />
      </svg>
    </TaskItem>
    <TaskItem $open aria-label="Notepad">
      <svg width="34" height="33" viewBox="0 0 34 33">
        <path d="M29 3l4 2-3 27-9-2z" fill="#8d7447" />
        <path d="M13 2l17 2-6 28L0 25z" fill="#6ab6c6" />
        <path d="M13 3l16 2-3 12-19 4z" fill="#a9dbe3" />
        <path d="M24 32l6-28 2 4-3 23z" fill="#eef2f2" />
        <path d="M13 3.500l17 2" stroke="#666" strokeWidth="3" strokeDasharray="1.500 1.500" />
      </svg>
    </TaskItem>
    <TaskItem $focused aria-label="Chrome">
      <svg width="34" height="34" viewBox="0 0 34 34">
        <circle cx="17" cy="17" r="16.500" fill="#fbcb3d" />
        <path d="M2.700 8.800A16.500 16.500 0 0 1 31.300 8.800L17 8.800z" fill="#dc4437" />
        <path d="M2.700 8.800L9.900 21.200 17 25.200 16 33.500A16.500 16.500 0 0 1 2.700 8.800z" fill="#169f5c" />
        <path d="M2.700 8.800L10 21 17 8.800z" fill="#dc4437" />
        <path d="M24 21l-8 12.500L12 24z" fill="#169f5c" />
        <circle cx="17" cy="17" r="8.200" fill="#fff" />
        <circle cx="17" cy="17" r="6.500" fill="#4587f3" />
      </svg>
    </TaskItem>
    <TaskItem $open $stacked aria-label="Paint">
      <svg width="36" height="36" viewBox="0 0 36 36">
        <path d="M15 5q14-4 17 8 1 12-8 17-8 5-15 0-3-4-8-5-2-3 1-8 4-8 13-12z" fill="#c1e0f3" stroke="#6faad0" />
        <circle cx="6.500" cy="19" r="3.400" fill="#e5432d" />
        <circle cx="11.500" cy="13" r="3.400" fill="#58b437" />
        <circle cx="19.500" cy="10" r="3.600" fill="#f6b22c" />
        <circle cx="15.500" cy="21" r="2.600" fill="#eadbd8" stroke="#7fb2d4" />
        <path d="M28 10l3 1-11 24-2-1z" fill="#ee8127" />
        <path d="M27 1l7-1 2 6-4 5-4-2z" fill="#b98347" />
      </svg>
    </TaskItem>
    <Tray>
      <TrayButton aria-label="Show hidden icons">
        <svg width="18" height="10" viewBox="0 0 18 10" fill="none" stroke="#111" strokeWidth="1.500">
          <path d="M.5 9.500L9 1l8.500 8.500" />
        </svg>
      </TrayButton>
      <TrayButton aria-label="Muted">
        <svg width="21" height="19" viewBox="0 0 21 19" fill="none" stroke="#111" strokeWidth="1.400">
          <path d="M1 6.500h3.500L9 1.500v16l-4.500-5H1zM12.500 6l7 7M19.500 6l-7 7" />
        </svg>
      </TrayButton>
      <TrayButton aria-label="Battery">
        <svg width="25" height="18" viewBox="0 0 25 18" fill="none" stroke="#111" strokeWidth="1.400">
          <path d="M8 4h14.500v12H5V9M23 8h1.300v4H23" />
          <path d="M9 6h11.500v8H7V9h2z" fill="#111" />
          <path d="M1 4h6.500v3.500L5.500 9h-2L1 7.500zM2.500 0v4M6 0v4" />
        </svg>
      </TrayButton>
      <TrayButton aria-label="Pen">
        <svg width="22" height="20" viewBox="0 0 22 20" fill="none" stroke="#111" strokeWidth="1.500">
          <path d="M13 1l3 1-6 14-3 2.500V14zM7 10q-6 0-6 4.500T5 19q2 0 3-1M16 6q4 2 3.500 5-2 2-6 .5" />
        </svg>
      </TrayButton>
      <Clock>
        9:09 PM
        <br />
        10/3/2019
      </Clock>
      <Notifications aria-label="Notifications">
        <svg width="24" height="24" viewBox="0 0 24 24">
          <path d="M0 0h24v19h-9l-4 4-4-4H0z" />
          <path d="M4 5.500h16M4 9.500h16M4 13.500h11" stroke="#ddd" strokeWidth="1.400" />
        </svg>
        <NoticeCount>5</NoticeCount>
      </Notifications>
      <ShowDesktop />
    </Tray>
  </Taskbar>
);

export default function App() {
  return (
    <Desktop>
      <GlobalStyle />
      <BrowserChrome />
      <Viewport>
        <Page>
          <EditorBar>
            <EditorRow>
              <Brand>Editor</Brand>
              <MenuButton aria-label="Editor menu">
                <svg width="18" height="18" viewBox="0 0 18 18" stroke="#333" strokeWidth="3.600">
                  <path d="M0 2h18M0 9h18M0 16h18" />
                </svg>
                <Caret />
              </MenuButton>
              <BarSelect label="Data source" value="Pepperstone-Demo01" width={278} active />
              <BarSelect label="Symbol" value="EURUSD" width={161} />
              <BarSelect label="Period" value="M1" width={113} />
              <BarActions>
                <BarButton>
                  <PlusGlyph size={20} color="#333" />
                  <ButtonLabel>Portfolio</ButtonLabel>
                </BarButton>
                <BarButton $pressed>
                  <CloudDownload />
                  <ButtonLabel>Expert Advisor</ButtonLabel>
                  <Caret />
                </BarButton>
              </BarActions>
            </EditorRow>
          </EditorBar>
          <Columns>
            <section>
              <Heading>Market info</Heading>
              <InfoTable rows={marketInfo} label={258} />
              <Heading>Indicator chart</Heading>
              <ChartPanel>
                <IndicatorChart />
              </ChartPanel>
            </section>
            <section>
              <Heading>Strategy</Heading>
              <Card $color="#c5be8f">
                <CardTitle>Strategy Properties</CardTitle>
                <CardText>
                  Entry lots 0.01 lots
                  <br />
                  Stop Loss 16, Take Profit 44
                </CardText>
              </Card>
              <RuleGroup
                kind="entry"
                hint="Open a long position at Bar Open when the rule below is satisfied."
                title="Bollinger Bands"
                text="The bar opens below Lower Band after opening above it"
                color="#cfdfd3"
              />
              <RuleGroup
                kind="exit"
                hint="Close a long position at Bar Open when the rule below is satisfied."
                title="Envelopes"
                text="The bar opens above Upper Band after opening below it"
                color="#f1dfdc"
              />
            </section>
            <section>
              <Heading>Backtest output</Heading>
              <InfoTable rows={backtest} label={349} />
              <Heading>Balance chart</Heading>
              <ChartPanel>
                <BalanceChart />
              </ChartPanel>
            </section>
          </Columns>
        </Page>
        <Scrollbar aria-hidden>
          <svg width="12" height="7" viewBox="0 0 12 7" fill="#505050">
            <path d="M6 0l6 7H0z" />
          </svg>
          <ScrollTrack>
            <ScrollThumb />
          </ScrollTrack>
          <svg width="12" height="7" viewBox="0 0 12 7" fill="#505050">
            <path d="M0 0h12L6 7z" />
          </svg>
        </Scrollbar>
      </Viewport>
      <WindowsTaskbar />
    </Desktop>
  );
}
